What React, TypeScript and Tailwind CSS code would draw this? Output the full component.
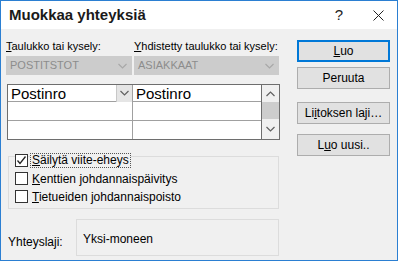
import React from 'react';

const font = { fontFamily: '"Liberation Sans", Arial, sans-serif' };

const Chevron = ({ up = false, color = '#606060' }: { up?: boolean; color?: string }) => (
    <svg width="9" height="6" viewBox="0 0 9 6" className="block">
        <polyline
            points={up ? '0.5,5 4.5,1 8.5,5' : '0.5,1 4.5,5 8.5,1'}
            fill="none"
            stroke={color}
            strokeWidth="1.2"
        />
    </svg>
);

const Checkbox = ({ checked = false }: { checked?: boolean }) => (
    <div className="w-[13px] h-[13px] border border-[#333333] bg-white flex items-center justify-center shrink-0">
        {checked && (
            <svg width="11" height="11" viewBox="0 0 11 11">
                <polyline points="1.5,5.5 4,8.5 9.5,1.5" fill="none" stroke="#222" strokeWidth="1.3" />
            </svg>
        )}
    </div>
);

const Button = ({ children, primary = false }: { children: React.ReactNode; primary?: boolean }) => (
    <div
        className={`w-[93px] h-[22px] flex items-center justify-center text-[12px] text-black bg-[#e1e1e1] ${
            primary ? 'border-2 border-[#0078d7]' : 'border border-[#adadad]'
        }`}
    >
        {children}
    </div>
);

export default function App() {
    return (
        <div className="w-[398px] h-[261px] border border-[#2b7fd2] flex flex-col bg-[#f0f0f0] text-black" style={font}>
            {/* title bar */}
            <div className="h-[28px] bg-white flex items-center shrink-0">
                <div className="pl-[8px] text-[15px] font-bold text-[#1a1a1a] flex-1">Muokkaa yhteyksiä</div>
                <div className="text-[15px] text-[#222] mr-[30px]">?</div>
                <svg width="11" height="11" viewBox="0 0 11 11" className="mr-[13px]">
                    <line x1="0.5" y1="0.5" x2="10.5" y2="10.5" stroke="#222" strokeWidth="1" />
                    <line x1="10.5" y1="0.5" x2="0.5" y2="10.5" stroke="#222" strokeWidth="1" />
                </svg>
            </div>

            <div className="flex flex-1">
                {/* left column */}
                <div className="w-[296px] pl-[5px] flex flex-col">
                    <div className="flex mt-[10px] text-[11px] leading-[14px]">
                        <div className="w-[128px]"><span className="underline">T</span>aulukko tai kysely:</div>
                        <div><span className="underline">Y</span>hdistetty taulukko tai kysely:</div>
                    </div>
                    <div className="flex mt-[3px] gap-[2px]">
                        <div className="w-[126px] h-[19px] bg-[#cccccc] flex items-center justify-between pl-[4px] pr-[5px] text-[11px] text-[#8c8c8c]">
                            POSTITSTOT
                            <Chevron color="#a8a8a8" />
                        </div>
                        <div className="w-[145px] h-[19px] bg-[#cccccc] flex items-center justify-between pl-[4px] pr-[5px] text-[11px] text-[#8c8c8c]">
                            ASIAKKAAT
                            <Chevron color="#a8a8a8" />
                        </div>
                    </div>

                    {/* grid */}
                    <div className="mt-[9px] ml-[1px] w-[273px] h-[56px] border border-[#6e6e6e] bg-white flex">
                        <div className="flex-1 flex flex-col">
                            <div className="h-[17px] flex border-b border-[#a0a0a0]">
                                <div className="w-[125px] flex items-center border-r border-[#a0a0a0]">
                                    <span className="flex-1 pl-[3px] text-[15px] leading-[17px]">Postinro</span>
                                    <div className="w-[16px] h-[17px] bg-[#e5e5e5] border-l border-[#c8c8c8] flex items-center justify-center">
                                        <Chevron />
                                    </div>
                                </div>
                                <span className="flex-1 pl-[3px] text-[15px] leading-[17px]">Postinro</span>
                            </div>
                            <div className="h-[19px] flex border-b border-[#a0a0a0]">
                                <div className="w-[125px] border-r border-[#a0a0a0]" />
                            </div>
                            <div className="flex-1 flex">
                                <div className="w-[125px] border-r border-[#a0a0a0]" />
                            </div>
                        </div>
                        <div className="w-[18px] border-l border-[#6e6e6e] bg-[#f0f0f0] flex flex-col items-center">
                            <div className="h-[17px] flex items-center justify-center"><Chevron up /></div>
                            <div className="w-[17px] h-[17px] bg-[#cdcdcd]" />
                            <div className="flex-1 flex items-center justify-center"><Chevron /></div>
                        </div>
                    </div>

                    {/* group box */}
                    <div className="mt-[16px] ml-[2px] w-[271px] h-[53px] border border-[#dcdcdc] flex flex-col pl-[6px]">
                        <div className="-mt-[4px] flex items-center gap-[2px] h-[15px]">
                            <Checkbox checked />
                            <span className="bg-[#f0f0f0] border border-dotted border-[#555] px-[1px] text-[12px] leading-[13px]">
                                <span className="underline">S</span>äilytä viite-eheys
                            </span>
                        </div>
                        <div className="mt-[3px] flex items-center gap-[4px] h-[15px] text-[12px]">
                            <Checkbox />
                            <span><span className="underline">K</span>enttien johdannaispäivitys</span>
                        </div>
                        <div className="mt-[3px] flex items-center gap-[4px] h-[15px] text-[12px]">
                            <Checkbox />
                            <span><span className="underline">T</span>ietueiden johdannaispoisto</span>
                        </div>
                    </div>

                    {/* relationship type */}
                    <div className="mt-[10px] flex items-start">
                        <div className="w-[70px] pl-[2px] mt-[14px] text-[12px]">Yhteyslaji:</div>
                        <div className="w-[203px] h-[37px] border border-[#dcdcdc] pl-[6px] pt-[10px] text-[12px]">Yksi-moneen</div>
                    </div>
                </div>

                {/* right column */}
                <div className="flex flex-col pt-[11px]">
                    <Button primary><span className="underline">L</span>uo</Button>
                    <div className="mt-[5px]"><Button>Peruuta</Button></div>
                    <div className="mt-[13px]"><Button>Li<span className="underline">i</span>toksen laji…</Button></div>
                    <div className="mt-[10px]"><Button>L<span className="underline">u</span>o uusi..</Button></div>
                </div>
            </div>
        </div>
    );
}
